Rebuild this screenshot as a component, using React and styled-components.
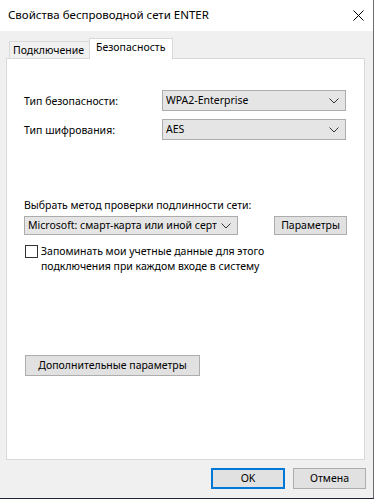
import React from "react";
import styled, { createGlobalStyle, css } from "styled-components";

const Global = createGlobalStyle`
  html, body { margin: 0; padding: 0; background: #f0f0f0; }
  * { box-sizing: border-box; }
  body {
    font-family: "Segoe UI", "Noto Sans", "Open Sans", sans-serif;
    font-size: 10.5px;
    color: #000;
  }
`;

const Window = styled.div`
  width: 374px;
  height: 499px;
  display: flex;
  flex-direction: column;
  border-right: 1px solid #6b6b6b;
  border-bottom: 1px solid #1f2633;
  background: #f0f0f0;
`;

const TitleBar = styled.div`
  height: 31px;
  flex: none;
  background: #fff;
  display: flex;
  align-items: center;
  padding-left: 8px;
  padding-bottom: 1px;
`;

const Title = styled.div`
  flex: 1;
  font-size: 11.5px;
  line-height: 16px;
`;

const CloseBox = styled.div`
  width: 30px;
  height: 31px;
  display: flex;
  align-items: center;
  justify-content: center;
`;

const Body = styled.div`
  flex: 1;
  display: flex;
  flex-direction: column;
  padding: 7px 8px 0 6px;
`;

const TabStrip = styled.div`
  height: 20px;
  display: flex;
  align-items: flex-end;
  padding-left: 3px;
  position: relative;
  z-index: 1;
`;

const Tab = styled.div`
  display: flex;
  align-items: center;
  border: 1px solid #d9d9d9;
  border-bottom: none;
  line-height: 15px;
  white-space: nowrap;
  ${(p) =>
    p.$active
      ? css`
          width: 84px;
          height: 21px;
          margin-bottom: -1px;
          background: #fff;
          padding: 0 0 4px 6px;
        `
      : css`
          width: 80px;
          height: 17px;
          border-right: none;
          background: #f0f0f0;
          padding: 1px 0 0 3px;
        `}
`;

const Panel = styled.div`
  flex: 1;
  background: #fff;
  border: 1px solid #d9d9d9;
  display: flex;
  flex-direction: column;
  align-items: flex-start;
  padding: 31px 18px 0 17px;
`;

const FieldRow = styled.div`
  display: flex;
  align-items: center;
  width: 100%;
  margin-top: ${(p) => p.$gap || 0}px;
`;

const FieldLabel = styled.div`
  width: 138px;
  flex: none;
  line-height: 15px;
  padding-top: 1px;
`;

const SelectBox = styled.div`
  width: ${(p) => p.$w}px;
  height: ${(p) => p.$h || 21}px;
  flex: none;
  display: flex;
  align-items: center;
  gap: 4px;
  background: #e5e5e5;
  border: 1px solid #acacac;
  padding: 0 6px 0 3px;
  white-space: nowrap;
  overflow: hidden;
`;

const SelectText = styled.span`
  flex: 1;
  overflow: hidden;
  line-height: 15px;
`;

const Chevron = () => (
  <svg width="10" height="6" viewBox="0 0 10 6" style={{ flex: "none" }}>
    <path d="M0.5 0.5 L5 5 L9.5 0.5" fill="none" stroke="#333" strokeWidth="1" />
  </svg>
);

const SectionLabel = styled.div`
  line-height: 15px;
  margin-top: 58px;
`;

const Button = styled.button`
  font: inherit;
  color: #000;
  background: #e1e1e1;
  border: 1px solid #adadad;
  height: ${(p) => p.$h || 21}px;
  width: ${(p) => p.$w}px;
  padding: 0;
  flex: none;
  line-height: 15px;
  ${(p) =>
    p.$primary &&
    css`
      border: 2px solid #0078d7;
    `}
`;

const CheckRow = styled.label`
  display: flex;
  align-items: flex-start;
  margin-top: 9px;
  margin-left: 1px;
  line-height: 15px;
`;

const CheckBox = styled.span`
  width: 13px;
  height: 13px;
  flex: none;
  border: 1px solid #333;
  background: #fff;
  margin-top: 1px;
  margin-right: 3px;
`;

const Footer = styled.div`
  height: 38px;
  flex: none;
  display: flex;
  justify-content: flex-end;
  align-items: flex-start;
  gap: 8px;
  padding-top: 8px;
  margin-right: -1px;
`;

export default function App() {
  return (
    <>
      <Global />
      <Window>
        <TitleBar>
          <Title>Свойства беспроводной сети ENTER</Title>
          <CloseBox>
            <svg width="11" height="11" viewBox="0 0 11 11">
              <path d="M0.5 0.5 L10.5 10.5 M10.5 0.5 L0.5 10.5" stroke="#000" strokeWidth="1" />
            </svg>
          </CloseBox>
        </TitleBar>
        <Body>
          <TabStrip>
            <Tab>Подключение</Tab>
            <Tab $active>Безопасность</Tab>
          </TabStrip>
          <Panel>
            <FieldRow>
              <FieldLabel>Тип безопасности:</FieldLabel>
              <SelectBox $w={184}>
                <SelectText>WPA2-Enterprise</SelectText>
                <Chevron />
              </SelectBox>
            </FieldRow>
            <FieldRow $gap={8}>
              <FieldLabel>Тип шифрования:</FieldLabel>
              <SelectBox $w={184}>
                <SelectText>AES</SelectText>
                <Chevron />
              </SelectBox>
            </FieldRow>
            <SectionLabel>Выбрать метод проверки подлинности сети:</SectionLabel>
            <FieldRow $gap={3}>
              <SelectBox $w={214} $h={19}>
                <SelectText>Microsoft: смарт-карта или иной сертификат</SelectText>
                <Chevron />
              </SelectBox>
              <Button $w={73} $h={19} style={{ marginLeft: 36 }}>
                Параметры
              </Button>
            </FieldRow>
            <CheckRow>
              <CheckBox />
              <span>
                Запоминать мои учетные данные для этого
                <br />
                подключения при каждом входе в систему
              </span>
            </CheckRow>
            <Button $w={175} style={{ marginTop: 81, marginLeft: 1 }}>
              Дополнительные параметры
            </Button>
          </Panel>
          <Footer>
            <Button $w={74} $primary>
              OK
            </Button>
            <Button $w={73}>Отмена</Button>
          </Footer>
        </Body>
      </Window>
    </>
  );
}
